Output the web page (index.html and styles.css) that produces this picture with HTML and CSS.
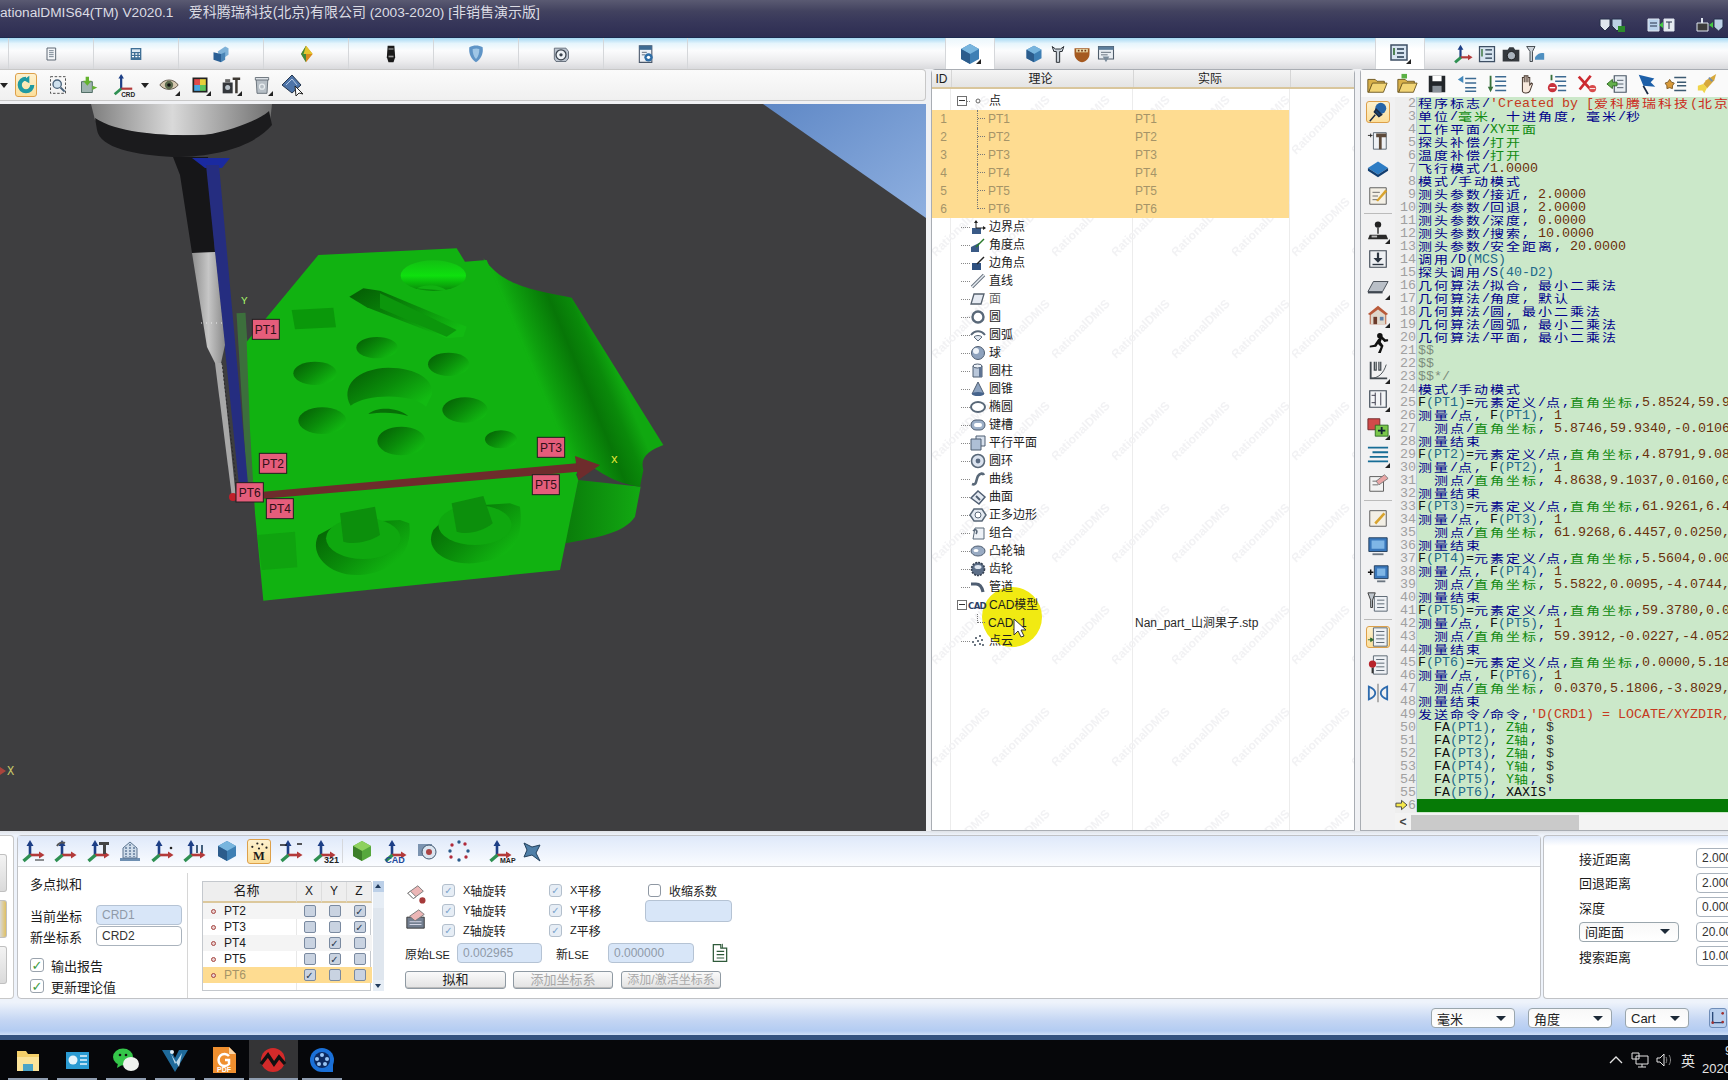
FILE: index.html
```html
<!DOCTYPE html>
<html lang="zh">
<head>
<meta charset="utf-8">
<title>RationalDMIS64</title>
<link rel="stylesheet" href="styles.css">
</head>
<body>
<svg class="sprite" aria-hidden="true">
<defs>
<symbol id="axis" viewBox="0 0 24 24"><path d="M9 4v13" stroke="#1d3f86" stroke-width="2.6"/><path d="M5.5 7L9 1l3.5 6z" fill="#1d3f86"/><path d="M9 16h10" stroke="#b33a3a" stroke-width="2.6"/><path d="M18 12.5l5.5 3.5-5.5 3.5z" fill="#b33a3a"/><path d="M9.5 16l-7 6" stroke="#2e9052" stroke-width="3.4"/></symbol>
<symbol id="paper" viewBox="0 0 24 24"><path d="M6 3h13v18H6z" fill="#f4f6f8" stroke="#55606c" stroke-width="1.4"/><path d="M9 7h7M9 10h7M9 13h7M9 16h7" stroke="#6a7684" stroke-width="1.3"/></symbol>
<symbol id="cube" viewBox="0 0 24 24"><path d="M12 2l9 5v10l-9 5-9-5V7z" fill="#3e7fb4"/><path d="M12 2l9 5-9 5-9-5z" fill="#78b5de"/><path d="M12 12v10l-9-5V7z" fill="#2c5c8c"/></symbol>
</defs>
</svg>

<header class="titlebar">
<div class="titletext">ationalDMIS64(TM) V2020.1 &nbsp; &nbsp;<span class="cj">爱科腾瑞科技(北京)有限公司</span> (2003-2020) [<span class="cj">非销售演示版</span>]</div>
<div class="wintools">
<svg class="wt" viewBox="0 0 28 16"><path d="M2 2h10v7l-5 5-5-5z" fill="#dfe5ee" stroke="#27304a"/><path d="M14 2h10v7l-5 5-5-5z" fill="#bcd0e6" stroke="#27304a"/><path d="M20 9h7v6h-7z" fill="#2c8b2c"/></svg>
<svg class="wt" viewBox="0 0 28 16"><path d="M1 2h11v12H1z" fill="#b9d1ea" stroke="#dfe6f0"/><path d="M3 6h7M3 9h7" stroke="#27304a"/><path d="M17 2h10v12H17z" fill="#e6ebf0" stroke="#dfe6f0"/><path d="M19 5h6M22 5v7" stroke="#27304a"/><path d="M12 8l4-3v6z" fill="#43c843"/></svg>
<svg class="wt" viewBox="0 0 28 16"><path d="M1 6h11v8H1z" fill="#3c3c3c" stroke="#dfe6f0"/><path d="M6 1v5" stroke="#dfe6f0" stroke-width="2"/><path d="M18 2h9v8l-4.500 4-4.500-4z" fill="#bcd0e6" stroke="#27304a"/><path d="M13 8l4-3v6z" fill="#43c843"/></svg>
</div>
</header>

<nav class="tabstrip">
<div class="tabs-left">
<div class="tab"><svg class="i16" viewBox="0 0 24 24"><use href="#paper"/></svg></div>
<div class="tab"><svg class="i16" viewBox="0 0 24 24"><path d="M4 3h16v18H4z" fill="#3f6f96"/><path d="M6 5h12v4H6z" fill="#dbe8f2"/><path d="M6 11h3v2H6zM11 11h3v2h-3zM16 11h2v2h-2zM6 15h3v2H6zM11 15h3v2h-3zM16 15h2v2h-2z" fill="#fff"/></svg></div>
<div class="tab"><svg class="i20" viewBox="0 0 24 24"><path d="M8 9l9-6 4 2v8l-9 6z" fill="#7fb2d8"/><path d="M3 10l9 2v10l-9-3z" fill="#2a5f95"/><path d="M12 12l5-2v9l-5 3z" fill="#4a85b6"/></svg></div>
<div class="tab"><svg class="i20" viewBox="0 0 24 24"><path d="M12 2l8 10-8 10-6-10z" fill="#d98a1c"/><path d="M12 2L6 12l6 10z" fill="#3f8a3a"/><path d="M12 2l8 10H9z" fill="#e4c52c"/></svg></div>
<div class="tab"><svg class="i20" viewBox="0 0 24 24"><path d="M8 2h8l1 14-2 6H9l-2-6z" fill="#1a1a1a"/><path d="M9 5h6v2H9z" fill="#777"/><path d="M9 14h6v2H9z" fill="#999"/></svg></div>
<div class="tab"><svg class="i20" viewBox="0 0 24 24"><path d="M4 4c5-3 11-3 16 0 1 8-2 14-8 18C6 18 3 12 4 4z" fill="#5f94c6"/><path d="M8 6c3-1 6-1 8 0 0 5-1 9-4 12-3-3-4-7-4-12z" fill="#9fc6e6"/></svg></div>
<div class="tab"><svg class="i20" viewBox="0 0 24 24"><path d="M4 5h14l3 4v8l-3 4H6l-2-3z" fill="#bcc4cf" stroke="#56606c"/><circle cx="12" cy="13" r="6" fill="#eef2f6" stroke="#39424c" stroke-width="1.5"/><circle cx="12" cy="13" r="2" fill="#39424c"/></svg></div>
<div class="tab"><svg class="i20" viewBox="0 0 24 24"><path d="M4 2h15v20H4z" fill="#eef1f6" stroke="#49576a" stroke-width="1.3"/><path d="M4 2h15v5H4z" fill="#3e6a92"/><path d="M7 10h6M7 13h4" stroke="#49576a"/><circle cx="15" cy="16" r="5" fill="#2e6da6"/><circle cx="15" cy="16" r="2" fill="#fff"/></svg></div>
</div>
<div class="tabs-tree">
<div class="acttab"><svg class="i24" viewBox="0 0 24 24"><use href="#cube"/><path d="M18 22l5-5v5z" fill="#222"/></svg></div>
<div class="tabicons tree-icons">
<svg class="i20" viewBox="0 0 24 24"><use href="#cube"/></svg>
<svg class="i20" viewBox="0 0 24 24"><path d="M5 3l2 6h3v13h4V9h3l2-6-4 3h-6z" fill="#cbd2d9" stroke="#2d3238" stroke-width="1.2"/></svg>
<svg class="i20" viewBox="0 0 24 24"><path d="M3 5h18v7c0 6-5 9-9 10-4-1-9-4-9-10z" fill="#a55a20"/><path d="M5 6h14v4H5z" fill="#e9d6a2"/><path d="M7 7h2v2H7zM11 7h2v2h-2zM15 7h2v2h-2z" fill="#703512"/></svg>
<svg class="i20" viewBox="0 0 24 24"><path d="M3 3h18v15H3z" fill="#e8edf2" stroke="#4f5c6a" stroke-width="1.3"/><path d="M3 3h18v4H3z" fill="#5c7d9b"/><path d="M6 10h12M6 13h8" stroke="#4f5c6a"/><path d="M8 15l4 7 4-7z" fill="#7a8b9a"/></svg>
</div>
</div>
<div class="tabs-code">
<div class="acttab"><svg class="i24" viewBox="0 0 24 24"><path d="M3 3h16v15H3z" fill="#d7e4f0" stroke="#3e4f64" stroke-width="1.5"/><path d="M9 7h7M9 11h7M9 15h7" stroke="#25384d" stroke-width="1.5"/><path d="M6 6v7" stroke="#2f6b2f" stroke-width="1.6"/><path d="M18 22l5-5v5z" fill="#222"/></svg></div>
<div class="tabicons code-icons">
<svg class="i20" viewBox="0 0 24 24"><use href="#axis"/></svg>
<svg class="i20" viewBox="0 0 24 24"><path d="M3 3h18v18H3z" fill="#d7e4f0" stroke="#3e4f64" stroke-width="1.5"/><path d="M10 7h8M10 12h8M10 17h8" stroke="#25384d" stroke-width="1.5"/><path d="M6 6v9" stroke="#2f6b2f" stroke-width="1.6"/></svg>
<svg class="i20" viewBox="0 0 24 24"><path d="M2 7h6l2-3h5l2 3h5v14H2z" fill="#35393e"/><circle cx="12.500" cy="14" r="5" fill="#aab3bd" stroke="#111"/></svg>
<svg class="i20" viewBox="0 0 24 24"><path d="M2 3h10l-3 6v12H6V9z" fill="#cbd2d9" stroke="#2d3238"/><path d="M12 16c3-5 7-6 11-5v8H12z" fill="#4f8fc0"/></svg>
</div>
</div>
</nav>

<main class="workspace">
<section class="cadcol">
<div class="cadbar">
<span class="caret first"></span>
<span class="tool active"><svg class="i20" viewBox="0 0 24 24"><path d="M12 2a10 10 0 1 0 10 10h-5a5 5 0 1 1-5-5z" fill="#1f9aa2"/><path d="M9 6l7-5v9z" fill="#1f9aa2"/></svg></span>
<span class="tool"><svg class="i20" viewBox="0 0 24 24"><path d="M3 2h18v20H3z" fill="none" stroke="#333" stroke-dasharray="3 2"/><circle cx="11" cy="11" r="5" fill="#cfe1ee" stroke="#49627a" stroke-width="1.6"/><path d="M15 15l5 5" stroke="#49627a" stroke-width="2.400"/></svg></span>
<span class="tool"><svg class="i20" viewBox="0 0 24 24"><path d="M3 8h13v13H3z" fill="#9fb4b0" stroke="#3a5a50"/><path d="M8 2v5h-3l5 6 5-6h-3V2z" fill="#63b32e"/><path d="M16 13l6 2-6 3z" fill="#63b32e"/></svg></span>
<span class="tool wide"><svg class="crd" viewBox="0 0 30 26"><path d="M13 3v15" stroke="#1d3f86" stroke-width="2.400"/><path d="M10 6l3-5 3 5z" fill="#1d3f86"/><path d="M13 17h12" stroke="#b33a3a" stroke-width="2.400"/><path d="M13 17l-7 6" stroke="#2e9052" stroke-width="3"/><text x="13" y="26" class="crdtxt">CRD</text></svg></span>
<span class="caret after"></span>
<span class="tool corner"><svg class="i20" viewBox="0 0 24 24"><path d="M1 12c5-8 17-8 22 0-5 7-17 7-22 0z" fill="#d6c8b0" stroke="#4d4338"/><circle cx="12" cy="12" r="5" fill="#5d6b4d"/><circle cx="12" cy="12" r="2.200" fill="#111"/></svg></span>
<span class="tool corner"><svg class="i20" viewBox="0 0 24 24"><path d="M3 3h18v18H3z" fill="#222"/><path d="M5 5h7v7H5z" fill="#e24a4a"/><path d="M12 5h7v7h-7z" fill="#e6cf3a"/><path d="M5 12h7v7H5z" fill="#4aa6e2"/><path d="M12 12h7v7h-7z" fill="#5ac45a"/></svg></span>
<span class="tool corner"><svg class="i20" viewBox="0 0 24 24"><path d="M2 9h12v13H2z" fill="#33363a"/><path d="M5 5h6v4H5z" fill="#666"/><path d="M14 3h9v3h-3v16h-3V6h-3z" fill="#3e3a34"/><circle cx="8" cy="15" r="3" fill="#b9c2ca"/></svg></span>
<span class="tool corner"><svg class="i20" viewBox="0 0 24 24"><path d="M5 5h14l-1 17H6z" fill="#b7bfc6" stroke="#5a646e"/><path d="M4 3h16v3H4z" fill="#dbe0e5" stroke="#5a646e"/><circle cx="12" cy="14" r="3" fill="none" stroke="#e8edf0" stroke-width="1.500"/></svg></span>
<span class="tool"><svg class="i24" viewBox="0 0 24 24"><path d="M1 12L11 2l9 10-9 8z" fill="#4e74a8" stroke="#22344c"/><path d="M5 12l6-6 5 6" fill="none" stroke="#b6cbe6"/><path d="M14 13l1 10 3-3 4 1z" fill="#fff" stroke="#222"/></svg></span>
</div>
<div class="viewport">
<svg class="scene" viewBox="0 104 926 727">
<defs>
<linearGradient id="sky" x1="0" x2="1" y1="0" y2="1"><stop offset="0" stop-color="#5f88c6"/><stop offset="1" stop-color="#8fb0e0"/></linearGradient>
<linearGradient id="head" x1="0" x2="1" y1="0" y2="0"><stop offset="0" stop-color="#7e7e7e"/><stop offset=".45" stop-color="#d9d9d9"/><stop offset="1" stop-color="#707070"/></linearGradient>
<linearGradient id="rod" x1="0" x2="1" y1="0" y2="0"><stop offset="0" stop-color="#8e8e8e"/><stop offset=".5" stop-color="#c6c6c6"/><stop offset="1" stop-color="#8a8a8a"/></linearGradient>
<linearGradient id="hole" x1="0" x2="1" y1="0" y2=".7"><stop offset="0" stop-color="#045a04"/><stop offset=".55" stop-color="#0a8c0a"/><stop offset="1" stop-color="#12ba12"/></linearGradient>
<linearGradient id="well" x1="0" x2="0" y1="0" y2="1"><stop offset="0" stop-color="#12c012"/><stop offset=".5" stop-color="#0ee00e"/><stop offset="1" stop-color="#098809"/></linearGradient>
<linearGradient id="fold" gradientUnits="userSpaceOnUse" x1="1000" y1="420" x2="1212" y2="332"><stop offset="0" stop-color="#11b211"/><stop offset=".15" stop-color="#0ea00e"/><stop offset=".55" stop-color="#077607"/><stop offset=".8" stop-color="#0a8a0a"/><stop offset="1" stop-color="#10a810"/></linearGradient>
<linearGradient id="side" x1="0" x2="1" y1="0" y2="0"><stop offset="0" stop-color="#0a7c0a"/><stop offset="1" stop-color="#12aa12"/></linearGradient>
</defs>
<path d="M763 104h163v114z" fill="url(#sky)"/>
<path d="M241 313L252 493" stroke="#3c6f3c" stroke-width="9"/>
<path d="M91 104H272L270 122C240 140 120 140 95 120z" fill="url(#head)"/>
<path d="M95 118C120 135 175 136 205 135 235 130 262 118 269 111L272 125C255 145 220 157 173 157 135 155 100 148 97 130z" fill="#1b1b1d"/>
<path d="M173 157H208L215 252 192 253 180 175z" fill="#161618"/>
<path d="M192 158H230L222 168H205z" fill="#1a2aa0"/>
<path d="M206 165H219L249 495H240z" fill="#252d80"/>
<path d="M192 253L215 252 225 345 221 363H215L207 347z" fill="url(#rod)"/>
<path d="M215 363H222L236 498H232z" fill="#a8a8a8"/>
<path d="M222 363L238 498" stroke="#222" stroke-width=".8" stroke-dasharray="2 2"/>
<path d="M201 323L224 323" stroke="#eee" stroke-dasharray="1 4"/>
<circle cx="233" cy="497" r="4" fill="#c0202a"/>
<text x="241" y="304" class="axlabel y">Y</text>
<text x="7" y="775" class="axlabel x">X</text>
<path d="M0 767l6 4-6 4z" fill="#a8443c"/>
<g transform="translate(200 230) scale(.33333)">
<path d="M1135 750L1322 770 1305 860C1270 910 1200 920 1095 940z" fill="url(#side)"/>
<path d="M850 85C900 150 950 175 1115 203L1390 645C1350 660 1318 680 1330 720L1320 770C1240 760 1190 720 1150 690L1120 750z" fill="url(#fold)"/>
<path d="M140 335L355 75 770 55 795 95 860 90 1135 750 1080 1020 190 1112 165 850 150 600z" fill="#11b211"/>
<path d="M172 915L285 905 292 1012 185 1020z" fill="#0fa30f"/>
<ellipse cx="700" cy="137" rx="98" ry="46" fill="url(#well)"/>
<path d="M650 175C680 160 720 165 740 182z" fill="#11b211"/>
<path d="M448 200L490 175 540 182 800 290 790 320 740 325 500 232z" fill="url(#hole)"/>
<path d="M540 190L770 300 740 320 540 235z" fill="#0c960c"/>
<path d="M275 240L400 233 408 292 285 298z" fill="#0a980a"/>
<ellipse cx="531" cy="353" rx="62" ry="32" fill="url(#hole)"/>
<ellipse cx="746" cy="403" rx="62" ry="35" fill="url(#hole)"/>
<ellipse cx="345" cy="430" rx="65" ry="35" fill="url(#hole)"/>
<path d="M452 527C420 470 470 415 565 413 650 413 705 450 695 495L678 530C640 490 500 490 452 527z" fill="url(#hole)"/>
<path d="M505 552C530 530 590 530 625 558 580 545 540 548 505 552z" fill="#076f07"/>
<ellipse cx="795" cy="540" rx="68" ry="38" fill="url(#hole)"/>
<ellipse cx="367" cy="572" rx="72" ry="40" fill="url(#hole)"/>
<ellipse cx="604" cy="633" rx="72" ry="43" fill="url(#hole)"/>
<ellipse cx="903" cy="628" rx="48" ry="27" fill="url(#hole)"/>
<path d="M355 915C325 975 390 1040 480 1035 570 1030 640 975 628 880L600 870 420 880z" fill="url(#hole)"/>
<ellipse cx="490" cy="925" rx="112" ry="62" fill="#0fa80f"/>
<path d="M420 850L525 830 540 915C510 935 460 945 430 935z" fill="#0c8f0c"/>
<path d="M700 900C670 960 740 1005 820 1000 920 990 975 950 960 830L930 820 770 830z" fill="url(#hole)"/>
<ellipse cx="825" cy="885" rx="110" ry="60" fill="#0fa80f"/>
<path d="M755 820L850 798 878 880C850 905 800 915 770 905z" fill="#0c8f0c"/>
<path d="M190 785L1130 700 1135 725 190 806z" fill="#6e2c2c"/>
<path d="M1125 678L1200 705 1135 750z" fill="#6e2c2c"/>
<text x="1243" y="698" class="axlabel big">x</text>
<g class="mk"><rect x="157" y="268" width="81" height="60"/><text x="197" y="311">PT1</text></g>
<g class="mk"><rect x="178" y="670" width="82" height="60"/><text x="219" y="713">PT2</text></g>
<g class="mk"><rect x="1012" y="622" width="82" height="60"/><text x="1053" y="665">PT3</text></g>
<g class="mk"><rect x="997" y="734" width="81" height="60"/><text x="1038" y="776">PT5</text></g>
<g class="mk"><rect x="199" y="806" width="81" height="60"/><text x="240" y="848">PT4</text></g>
<g class="mk"><rect x="108" y="758" width="82" height="58"/><text x="149" y="800">PT6</text></g>
</g>
</svg>
</div>
</section>

<section class="treepanel">
<div class="treehead"><span class="h-id">ID</span><span class="h-th">理论</span><span class="h-ac">实际</span><span class="h-rest"></span></div>
<div class="treebody">
<svg class="wmark" aria-hidden="true"><defs><pattern id="wm" width="60" height="102" patternUnits="userSpaceOnUse"><text x="4" y="66" transform="rotate(-45 4 66)" class="wmt">RationalDMIS</text></pattern></defs><rect width="100%" height="100%" fill="url(#wm)"/></svg>
<div class="spot"></div>
<div class="row"><span class="c-id"></span><span class="c-th"><i class="box"></i><i class="dots short"></i><svg class="ti" viewBox="0 0 16 16"><circle cx="8" cy="8" r="2" fill="none" stroke="#666"/></svg><b class="nm">点</b></span></div>
<div class="row sel"><span class="c-id">1</span><span class="c-th"><i class="el"></i><b class="nm">PT1</b></span><span class="c-ac">PT1</span></div>
<div class="row sel"><span class="c-id">2</span><span class="c-th"><i class="el"></i><b class="nm">PT2</b></span><span class="c-ac">PT2</span></div>
<div class="row sel"><span class="c-id">3</span><span class="c-th"><i class="el"></i><b class="nm">PT3</b></span><span class="c-ac">PT3</span></div>
<div class="row sel"><span class="c-id">4</span><span class="c-th"><i class="el"></i><b class="nm">PT4</b></span><span class="c-ac">PT4</span></div>
<div class="row sel"><span class="c-id">5</span><span class="c-th"><i class="el"></i><b class="nm">PT5</b></span><span class="c-ac">PT5</span></div>
<div class="row sel"><span class="c-id">6</span><span class="c-th"><i class="el last"></i><b class="nm">PT6</b></span><span class="c-ac">PT6</span></div>
<div class="row"><span class="c-id"></span><span class="c-th"><i class="dots"></i><svg class="ti" viewBox="0 0 16 16"><path d="M2 9h9v6H2z" fill="#3a5a86"/><path d="M6 9V2M6 9h9" stroke="#222"/><path d="M4 4l2-3 2 3zM13 7l3 2-3 2z" fill="#222"/></svg><b class="nm">边界点</b></span></div>
<div class="row"><span class="c-id"></span><span class="c-th"><i class="dots"></i><svg class="ti" viewBox="0 0 16 16"><path d="M1 10l8-4v9H1z" fill="#3a5a86"/><path d="M6 10l8-8" stroke="#2b7a2b" stroke-width="1.500"/></svg><b class="nm">角度点</b></span></div>
<div class="row"><span class="c-id"></span><span class="c-th"><i class="dots"></i><svg class="ti" viewBox="0 0 16 16"><path d="M2 8h9v7H2z" fill="#2f5180"/><path d="M7 9l7-7" stroke="#222" stroke-width="1.500"/></svg><b class="nm">边角点</b></span></div>
<div class="row"><span class="c-id"></span><span class="c-th"><i class="dots"></i><svg class="ti" viewBox="0 0 16 16"><path d="M2 14L14 2" stroke="#6a7480" stroke-width="3.400"/><path d="M2 14L14 2" stroke="#e8edf3" stroke-width="1.400"/></svg><b class="nm">直线</b></span></div>
<div class="row"><span class="c-id"></span><span class="c-th"><i class="dots"></i><svg class="ti" viewBox="0 0 16 16"><path d="M4 3h10l-3 10H1z" fill="#e6ebf3" stroke="#56616e" stroke-width="1.300"/></svg><b class="nm mute">面</b></span></div>
<div class="row"><span class="c-id"></span><span class="c-th"><i class="dots"></i><svg class="ti" viewBox="0 0 16 16"><circle cx="8" cy="8" r="5.500" fill="#fff" stroke="#596878" stroke-width="2.400"/></svg><b class="nm">圆</b></span></div>
<div class="row"><span class="c-id"></span><span class="c-th"><i class="dots"></i><svg class="ti" viewBox="0 0 16 16"><path d="M1 8c4-5 10-5 14 0" fill="none" stroke="#596878" stroke-width="2"/><path d="M4 10c2-2 6-2 8 0l-4 4z" fill="#dfe6ef" stroke="#596878"/></svg><b class="nm">圆弧</b></span></div>
<div class="row"><span class="c-id"></span><span class="c-th"><i class="dots"></i><svg class="ti" viewBox="0 0 16 16"><circle cx="8" cy="8" r="6.500" fill="#8ea2bd" stroke="#4f5e72"/><circle cx="6" cy="6" r="3" fill="#eef3f9"/></svg><b class="nm">球</b></span></div>
<div class="row"><span class="c-id"></span><span class="c-th"><i class="dots"></i><svg class="ti" viewBox="0 0 16 16"><path d="M3 3h9v11H3z" fill="#b9c7da" stroke="#4f5e72"/><ellipse cx="7.500" cy="3" rx="4.500" ry="2" fill="#eef3f9" stroke="#4f5e72"/><path d="M9 4h3v10H9z" fill="#5f7392"/></svg><b class="nm">圆柱</b></span></div>
<div class="row"><span class="c-id"></span><span class="c-th"><i class="dots"></i><svg class="ti" viewBox="0 0 16 16"><path d="M8 1l6 12H2z" fill="#8da3c0" stroke="#4f5e72"/><ellipse cx="8" cy="13" rx="6" ry="2" fill="#46648c"/></svg><b class="nm">圆锥</b></span></div>
<div class="row"><span class="c-id"></span><span class="c-th"><i class="dots"></i><svg class="ti" viewBox="0 0 16 16"><ellipse cx="8" cy="8" rx="7" ry="5" fill="#fff" stroke="#596878" stroke-width="2"/></svg><b class="nm">椭圆</b></span></div>
<div class="row"><span class="c-id"></span><span class="c-th"><i class="dots"></i><svg class="ti" viewBox="0 0 16 16"><rect x="1" y="3" width="14" height="10" rx="5" fill="#9db0c8" stroke="#4f5e72"/><rect x="4" y="6" width="8" height="4" rx="2" fill="#fff"/></svg><b class="nm">键槽</b></span></div>
<div class="row"><span class="c-id"></span><span class="c-th"><i class="dots"></i><svg class="ti" viewBox="0 0 16 16"><path d="M6 1h9v10H6z" fill="#d7e0ec" stroke="#4f5e72"/><path d="M1 4h10v11H1z" fill="#aebfd6" stroke="#4f5e72"/></svg><b class="nm">平行平面</b></span></div>
<div class="row"><span class="c-id"></span><span class="c-th"><i class="dots"></i><svg class="ti" viewBox="0 0 16 16"><circle cx="8" cy="8" r="6.500" fill="#dbe3ef" stroke="#596878" stroke-width="1.600"/><circle cx="8" cy="8" r="2.400" fill="#5b6c82"/></svg><b class="nm">圆环</b></span></div>
<div class="row"><span class="c-id"></span><span class="c-th"><i class="dots"></i><svg class="ti" viewBox="0 0 16 16"><path d="M2 13c5 2 4-5 6-8s5-3 6-1" fill="none" stroke="#596878" stroke-width="2.600"/></svg><b class="nm">曲线</b></span></div>
<div class="row"><span class="c-id"></span><span class="c-th"><i class="dots"></i><svg class="ti" viewBox="0 0 16 16"><path d="M1 9l7-7 7 6-6 7z" fill="#e4eaf2" stroke="#4f5e72" stroke-width="1.500"/><path d="M6 7l4 4" stroke="#4f5e72" stroke-width="2"/></svg><b class="nm">曲面</b></span></div>
<div class="row"><span class="c-id"></span><span class="c-th"><i class="dots"></i><svg class="ti" viewBox="0 0 16 16"><path d="M4 2h8l4 6-4 6H4L0 8z" fill="#e4eaf2" stroke="#596878" stroke-width="1.500"/><circle cx="8" cy="8" r="3" fill="#fff" stroke="#596878"/></svg><b class="nm">正多边形</b></span></div>
<div class="row"><span class="c-id"></span><span class="c-th"><i class="dots"></i><svg class="ti" viewBox="0 0 16 16"><path d="M5 3h9v11H3z" fill="#eef2f7" stroke="#596878"/><path d="M3 6c3-3 5 0 3 3" fill="none" stroke="#596878" stroke-width="1.600"/></svg><b class="nm">组合</b></span></div>
<div class="row"><span class="c-id"></span><span class="c-th"><i class="dots"></i><svg class="ti" viewBox="0 0 16 16"><ellipse cx="8" cy="8" rx="7" ry="5" fill="#99abc3" stroke="#4f5e72"/><ellipse cx="6" cy="7.500" rx="2.500" ry="1.600" fill="#fff"/></svg><b class="nm">凸轮轴</b></span></div>
<div class="row"><span class="c-id"></span><span class="c-th"><i class="dots"></i><svg class="ti" viewBox="0 0 16 16"><circle cx="8" cy="8" r="6.500" fill="#5d6f88" stroke="#333f50" stroke-width="1.600" stroke-dasharray="2 1"/><ellipse cx="8" cy="6" rx="3.500" ry="2" fill="#dfe7f1"/></svg><b class="nm">齿轮</b></span></div>
<div class="row"><span class="c-id"></span><span class="c-th"><i class="dots"></i><svg class="ti" viewBox="0 0 16 16"><path d="M1 5h5c4 0 6 3 7 8" fill="none" stroke="#4f5e72" stroke-width="3.200"/></svg><b class="nm">管道</b></span></div>
<div class="row"><span class="c-id"></span><span class="c-th"><i class="box"></i><b class="cadmark">CAD</b><b class="nm cadnm">CAD模型</b></span></div>
<div class="row"><span class="c-id"></span><span class="c-th"><i class="el last"></i><b class="nm">CAD_1</b></span><span class="c-ac dark">Nan_part_山涧果子.stp</span></div>
<div class="row"><span class="c-id"></span><span class="c-th"><i class="dots"></i><svg class="ti" viewBox="0 0 16 16"><g fill="#3d4a5a"><circle cx="3" cy="9" r="1"/><circle cx="6" cy="5" r="1"/><circle cx="10" cy="3" r="1"/><circle cx="8" cy="8" r="1"/><circle cx="12" cy="7" r="1"/><circle cx="5" cy="12" r="1"/><circle cx="10" cy="11" r="1"/><circle cx="13" cy="12" r="1"/></g></svg><b class="nm">点云</b></span></div>
<svg class="cursor" viewBox="0 0 14 20"><path d="M1 1v16l4-4 3 6 3-1-3-6h5z" fill="#fff" stroke="#333"/></svg>
</div>
</section>

<section class="codepanel">
<div class="codetools">
<svg class="i22" viewBox="0 0 24 24"><path d="M2 7h8l2 2h8v3H7l-4 9H2z" fill="#d9b14a" stroke="#6a5520"/><path d="M7 11h16l-4 10H3z" fill="#f2d576" stroke="#6a5520"/></svg>
<svg class="i22" viewBox="0 0 24 24"><path d="M2 7h8l2 2h8v3H7l-4 9H2z" fill="#d9b14a" stroke="#6a5520"/><path d="M7 11h16l-4 10H3z" fill="#f2d576" stroke="#6a5520"/><path d="M6 1h6v5H6z" fill="#5ab044"/></svg>
<svg class="i22" viewBox="0 0 24 24"><path d="M3 3h18v18H3z" fill="#22262a"/><path d="M7 3h10v6H7z" fill="#fff"/><path d="M7 14h10v7H7z" fill="#8a929a"/></svg>
<svg class="i22" viewBox="0 0 24 24"><path d="M10 6h12M10 11h12M10 16h12M10 20h12" stroke="#3c6a92" stroke-width="1.700"/><path d="M8 3L2 7l6 4z" fill="#4488bb"/></svg>
<svg class="i22" viewBox="0 0 24 24"><path d="M10 4h12M10 9h12M10 14h12M10 19h12" stroke="#3c6a92" stroke-width="1.700"/><path d="M5 3v14" stroke="#38703a" stroke-width="2"/><path d="M2 15l3 6 3-6z" fill="#38703a"/></svg>
<svg class="i22" viewBox="0 0 24 24"><path d="M7 12V5h2v5V3h2v7V3h2v7V5h2v8l2-2 1 1-3 8c-1 2-7 3-8 0z" fill="#f7e8dc" stroke="#4a3b32" stroke-width="1.100"/></svg>
<svg class="i22" viewBox="0 0 24 24"><path d="M10 4h12M10 9h12M13 14h9M13 19h9" stroke="#3c6a92" stroke-width="1.700"/><path d="M6 2v6" stroke="#38703a" stroke-width="2"/><circle cx="7" cy="16" r="5" fill="#c8323c"/><path d="M4 16h6" stroke="#fff" stroke-width="1.500"/></svg>
<svg class="i22" viewBox="0 0 24 24"><path d="M3 4l13 14M16 3L4 18" stroke="#cc2a30" stroke-width="3"/><circle cx="18" cy="17" r="4" fill="#d84a4a"/><path d="M15 17h6" stroke="#fff"/></svg>
<svg class="i22" viewBox="0 0 24 24"><path d="M9 3h13v18H9z" fill="#e9eef3" stroke="#4b5866" stroke-width="1.300"/><path d="M12 8h7M12 12h7M12 16h7" stroke="#4b5866"/><path d="M1 12l6-5v3h5v4H7v3z" fill="#63b04a" stroke="#2f6a23"/></svg>
<svg class="i22" viewBox="0 0 24 24"><path d="M3 2l17 4-4 4 5 5-13-1z" fill="#1d5fa8"/><path d="M8 14l5 9" stroke="#1a2a44" stroke-width="2"/></svg>
<svg class="i22" viewBox="0 0 24 24"><path d="M9 5h13M9 19h13M12 10h10M12 14h10" stroke="#3c5a72" stroke-width="1.700"/><path d="M4 7l2 3 3 1-2 3 0 3-3-1-3 1 0-3-2-3 3-1z" fill="#d89a3a" stroke="#7a5520"/></svg>
<svg class="i22" viewBox="0 0 24 24"><path d="M8 12l3-4L22 1l-2 7-8 9z" fill="#d7a83a"/><path d="M2 14l6-2 4 4-3 6-2-3-5 0z" fill="#f0d44a"/><path d="M14 5l4 4" stroke="#7a8fa8" stroke-width="2"/></svg>
</div>
<div class="codewrap">
<div class="siderail">
<span class="rb active"><svg class="i22" viewBox="0 0 24 24"><circle cx="15" cy="8" r="6" fill="#2665a8"/><path d="M10 9l6 6-3 2-5-5zM9 15l-6 7" stroke="#1b2b44" stroke-width="1.600" fill="#18406e"/></svg></span>
<span class="rb"><svg class="i22" viewBox="0 0 24 24"><path d="M7 4h14v18H7z" fill="#eef1f5" stroke="#54606c"/><path d="M10 5h11v4h-5v13h-3V9h-3z" fill="#5d4a3a"/><path d="M1 7h5M4 5v4" stroke="#222"/></svg></span>
<span class="rb"><svg class="i22" viewBox="0 0 24 24"><path d="M1 12l11-7 11 7-11 7z" fill="#2d7cc4"/><path d="M1 12v3l11 7 11-7v-3l-11 7z" fill="#123e70"/></svg></span>
<span class="rb"><svg class="i22" viewBox="0 0 24 24"><path d="M3 3h18v18H3z" fill="#f4f0e6" stroke="#555"/><path d="M6 8h8M6 12h6M6 16h6" stroke="#666"/><path d="M10 17l10-12 2 2-10 11z" fill="#d8a32e"/></svg></span>
<span class="railsep"></span>
<span class="rb corner"><svg class="i22" viewBox="0 0 24 24"><circle cx="12" cy="5" r="3.500" fill="#222"/><path d="M11 8h2v7h-2z" fill="#555"/><path d="M3 16h18l2 5H1z" fill="#2a2a2a"/><path d="M5 17h6v2H5z" fill="#bbb"/></svg></span>
<span class="rb"><svg class="i22" viewBox="0 0 24 24"><path d="M3 3h18v18H3z" fill="#eef0f3" stroke="#3b4450" stroke-width="1.200"/><path d="M12 5v8" stroke="#2a3440" stroke-width="2.400"/><path d="M7 11l5 5 5-5z" fill="#2a3440"/><path d="M6 18h12" stroke="#2a3440" stroke-width="1.500"/></svg></span>
<span class="rb corner"><svg class="i22" viewBox="0 0 24 24"><path d="M7 6h16l-6 11H1z" fill="#b9bfc7" stroke="#3f4650"/><path d="M1 17h16v2H1z" fill="#3f4650"/></svg></span>
<span class="rb corner"><svg class="i22" viewBox="0 0 24 24"><path d="M12 2L1 11l2 1v10h18V12l2-1z" fill="#b95a3a"/><path d="M4 12l8-6 8 6v10H4z" fill="#dfd8cc"/><path d="M7 14h4v8H7z" fill="#6b3a2a"/><path d="M14 14h4v4h-4z" fill="#5f7fa8"/></svg></span>
<span class="rb"><svg class="i22" viewBox="0 0 24 24"><circle cx="14" cy="4" r="3" fill="#111"/><path d="M12 8l-4 6-5 1v2l7-1 2-3 3 3-3 7h3l3-8-3-4 1-3 3 3 4-1v-2l-3 0-4-4z" fill="#111"/></svg></span>
<span class="rb corner"><svg class="i22" viewBox="0 0 24 24"><path d="M4 2v18h18" fill="none" stroke="#42494f" stroke-width="2"/><path d="M8 2v9h2V2M13 2v9h2V2" fill="none" stroke="#42494f" stroke-width="1.400"/><path d="M4 20c8 0 14-5 17-15" fill="none" stroke="#42494f"/></svg></span>
<span class="rb corner"><svg class="i22" viewBox="0 0 24 24"><path d="M3 3h18v18H3z" fill="#f3f5f7" stroke="#3f4a56" stroke-width="1.300"/><path d="M9 5v14M15 5v14M5 8h4M5 16h4" stroke="#334"/></svg></span>
<span class="rb corner"><svg class="i22" viewBox="0 0 24 24"><path d="M1 3h13v12H1z" fill="#d14a4a" stroke="#6e2a2a"/><path d="M9 10h14v12H9z" fill="#7ac74a" stroke="#2e6a23"/><path d="M16 12v8M12 16h8" stroke="#123" stroke-width="2"/></svg></span>
<span class="rb corner"><svg class="i22" viewBox="0 0 24 24"><path d="M1 4h22M6 9h17M3 14h20M1 19h22" stroke="#176d96" stroke-width="2"/></svg></span>
<span class="rb"><svg class="i22" viewBox="0 0 24 24"><path d="M3 5h15v16H3z" fill="#f2f2f2" stroke="#555"/><path d="M6 10h8M6 14h6" stroke="#666"/><path d="M10 10L19 3l4 4-10 7z" fill="#e9a5a5" stroke="#777"/></svg></span>
<span class="railsep"></span>
<span class="rb"><svg class="i22" viewBox="0 0 24 24"><path d="M3 4h18v17H3z" fill="#f3efe5" stroke="#555"/><path d="M8 17l10-11 2 2-10 11z" fill="#d8a32e"/></svg></span>
<span class="rb"><svg class="i22" viewBox="0 0 24 24"><path d="M2 3h20v15H2z" fill="#3a78bc" stroke="#223c5a"/><path d="M5 6h14v9H5z" fill="#7fb6e6"/><path d="M6 20h12v2H6z" fill="#6b7580"/></svg></span>
<span class="rb"><svg class="i22" viewBox="0 0 24 24"><path d="M8 3h15v14H8z" fill="#3a78bc" stroke="#223c5a"/><path d="M11 6h9v8h-9z" fill="#7fb6e6"/><path d="M11 19h9v2h-9z" fill="#6b7580"/><path d="M1 10h6M4 7v6" stroke="#111" stroke-width="1.600"/></svg></span>
<span class="rb"><svg class="i22" viewBox="0 0 24 24"><path d="M8 6h14v16H8z" fill="#eef1f5" stroke="#54606c"/><path d="M11 10h8M11 14h8M11 18h8" stroke="#54606c"/><path d="M1 2l3 8v8h2v-8l3-8z" fill="#bfc6cd" stroke="#333"/></svg></span>
<span class="railsep"></span>
<span class="rb active"><svg class="i22" viewBox="0 0 24 24"><path d="M7 2h15v20H7z" fill="#eef1f5" stroke="#54606c"/><path d="M10 6h9M10 10h9M10 14h9M10 18h9" stroke="#54606c"/><path d="M1 15h4M4 13l3 2-3 2z" fill="#2f6b2f" stroke="#2f6b2f"/></svg></span>
<span class="rb"><svg class="i22" viewBox="0 0 24 24"><path d="M7 2h15v20H7z" fill="#eef1f5" stroke="#54606c"/><path d="M10 6h9M10 10h9M10 14h9M10 18h9" stroke="#54606c"/><circle cx="6" cy="11" r="4" fill="#b8232b"/><path d="M6 15v6" stroke="#333" stroke-width="2"/></svg></span>
<span class="rb"><svg class="i22" viewBox="0 0 24 24"><path d="M12 2v20" stroke="#777" stroke-width="1.200"/><path d="M2 5c5 2 7 4 7 7s-2 5-7 7z" fill="none" stroke="#2d6bae" stroke-width="2"/><path d="M22 5c-5 2-7 4-7 7s2 5 7 7z" fill="none" stroke="#2d6bae" stroke-width="2"/></svg></span>
</div>
<div class="editor">
<div class="lines">
<div class="ln"><span class="no">2</span><span class="tx"><b class="k">程序标志</b>/<i class="r">'Created by [</i><b class="rk">爱科腾瑞科技</b><i class="r">(</i><b class="rk">北京</b><i class="r">)</i></span></div>
<div class="ln"><span class="no">3</span><span class="tx"><b class="k">单位</b>/<b class="g">毫米</b>, <b class="k">十进角度</b>, <b class="k">毫米</b>/<b class="k">秒</b></span></div>
<div class="ln"><span class="no">4</span><span class="tx"><b class="k">工作平面</b>/<i class="gn">XY</i><b class="g">平面</b></span></div>
<div class="ln"><span class="no">5</span><span class="tx"><b class="k">探头补偿</b>/<b class="g">打开</b></span></div>
<div class="ln"><span class="no">6</span><span class="tx"><b class="k">温度补偿</b>/<b class="g">打开</b></span></div>
<div class="ln"><span class="no">7</span><span class="tx"><b class="k">飞行模式</b>/<i class="n">1.0000</i></span></div>
<div class="ln"><span class="no">8</span><span class="tx"><b class="k">模式</b>/<b class="k">手动模式</b></span></div>
<div class="ln"><span class="no">9</span><span class="tx"><b class="k">测头参数</b>/<b class="k">接近</b>, <i class="n">2.0000</i></span></div>
<div class="ln"><span class="no">10</span><span class="tx"><b class="k">测头参数</b>/<b class="k">回退</b>, <i class="n">2.0000</i></span></div>
<div class="ln"><span class="no">11</span><span class="tx"><b class="k">测头参数</b>/<b class="k">深度</b>, <i class="n">0.0000</i></span></div>
<div class="ln"><span class="no">12</span><span class="tx"><b class="k">测头参数</b>/<b class="k">搜索</b>, <i class="n">10.0000</i></span></div>
<div class="ln"><span class="no">13</span><span class="tx"><b class="k">测头参数</b>/<b class="k">安全距离</b>, <i class="n">20.0000</i></span></div>
<div class="ln"><span class="no">14</span><span class="tx"><b class="k">调用</b>/D<i class="p">(MCS)</i></span></div>
<div class="ln"><span class="no">15</span><span class="tx"><b class="k">探头调用</b>/S<i class="p">(40-D2)</i></span></div>
<div class="ln"><span class="no">16</span><span class="tx"><b class="k">几何算法</b>/<b class="k">拟合</b>, <b class="k">最小二乘法</b></span></div>
<div class="ln"><span class="no">17</span><span class="tx"><b class="k">几何算法</b>/<b class="k">角度</b>, <b class="k">默认</b></span></div>
<div class="ln"><span class="no">18</span><span class="tx"><b class="k">几何算法</b>/<b class="k">圆</b>, <b class="k">最小二乘法</b></span></div>
<div class="ln"><span class="no">19</span><span class="tx"><b class="k">几何算法</b>/<b class="k">圆弧</b>, <b class="k">最小二乘法</b></span></div>
<div class="ln"><span class="no">20</span><span class="tx"><b class="k">几何算法</b>/<b class="k">平面</b>, <b class="k">最小二乘法</b></span></div>
<div class="ln"><span class="no">21</span><span class="tx"><i class="c">$$</i></span></div>
<div class="ln"><span class="no">22</span><span class="tx"><i class="c">$$</i></span></div>
<div class="ln"><span class="no">23</span><span class="tx"><i class="c">$$*/</i></span></div>
<div class="ln"><span class="no">24</span><span class="tx"><b class="k">模式</b>/<b class="k">手动模式</b></span></div>
<div class="ln"><span class="no">25</span><span class="tx"><i class="d">F</i><i class="p">(PT1)</i><i class="d">=</i><b class="k">元素定义</b>/<b class="k">点</b>,<b class="g">直角坐标</b>,<i class="n">5.8524,59.9154,0.0000</i></span></div>
<div class="ln"><span class="no">26</span><span class="tx"><b class="k">测量</b>/<b class="k">点</b>, <i class="d">F</i><i class="p">(PT1)</i>, <i class="n">1</i></span></div>
<div class="ln"><span class="no">27</span><span class="tx">  <b class="k">测点</b>/<b class="g">直角坐标</b>, <i class="n">5.8746,59.9340,-0.0106,0</i></span></div>
<div class="ln"><span class="no">28</span><span class="tx"><b class="k">测量结束</b></span></div>
<div class="ln"><span class="no">29</span><span class="tx"><i class="d">F</i><i class="p">(PT2)</i><i class="d">=</i><b class="k">元素定义</b>/<b class="k">点</b>,<b class="g">直角坐标</b>,<i class="n">4.8791,9.0846,0.0000</i></span></div>
<div class="ln"><span class="no">30</span><span class="tx"><b class="k">测量</b>/<b class="k">点</b>, <i class="d">F</i><i class="p">(PT2)</i>, <i class="n">1</i></span></div>
<div class="ln"><span class="no">31</span><span class="tx">  <b class="k">测点</b>/<b class="g">直角坐标</b>, <i class="n">4.8638,9.1037,0.0160,0</i></span></div>
<div class="ln"><span class="no">32</span><span class="tx"><b class="k">测量结束</b></span></div>
<div class="ln"><span class="no">33</span><span class="tx"><i class="d">F</i><i class="p">(PT3)</i><i class="d">=</i><b class="k">元素定义</b>/<b class="k">点</b>,<b class="g">直角坐标</b>,<i class="n">61.9261,6.4301,0.0000</i></span></div>
<div class="ln"><span class="no">34</span><span class="tx"><b class="k">测量</b>/<b class="k">点</b>, <i class="d">F</i><i class="p">(PT3)</i>, <i class="n">1</i></span></div>
<div class="ln"><span class="no">35</span><span class="tx">  <b class="k">测点</b>/<b class="g">直角坐标</b>, <i class="n">61.9268,6.4457,0.0250,0</i></span></div>
<div class="ln"><span class="no">36</span><span class="tx"><b class="k">测量结束</b></span></div>
<div class="ln"><span class="no">37</span><span class="tx"><i class="d">F</i><i class="p">(PT4)</i><i class="d">=</i><b class="k">元素定义</b>/<b class="k">点</b>,<b class="g">直角坐标</b>,<i class="n">5.5604,0.0000,-4.0</i></span></div>
<div class="ln"><span class="no">38</span><span class="tx"><b class="k">测量</b>/<b class="k">点</b>, <i class="d">F</i><i class="p">(PT4)</i>, <i class="n">1</i></span></div>
<div class="ln"><span class="no">39</span><span class="tx">  <b class="k">测点</b>/<b class="g">直角坐标</b>, <i class="n">5.5822,0.0095,-4.0744,0</i></span></div>
<div class="ln"><span class="no">40</span><span class="tx"><b class="k">测量结束</b></span></div>
<div class="ln"><span class="no">41</span><span class="tx"><i class="d">F</i><i class="p">(PT5)</i><i class="d">=</i><b class="k">元素定义</b>/<b class="k">点</b>,<b class="g">直角坐标</b>,<i class="n">59.3780,0.0000,-4.0</i></span></div>
<div class="ln"><span class="no">42</span><span class="tx"><b class="k">测量</b>/<b class="k">点</b>, <i class="d">F</i><i class="p">(PT5)</i>, <i class="n">1</i></span></div>
<div class="ln"><span class="no">43</span><span class="tx">  <b class="k">测点</b>/<b class="g">直角坐标</b>, <i class="n">59.3912,-0.0227,-4.0522,0</i></span></div>
<div class="ln"><span class="no">44</span><span class="tx"><b class="k">测量结束</b></span></div>
<div class="ln"><span class="no">45</span><span class="tx"><i class="d">F</i><i class="p">(PT6)</i><i class="d">=</i><b class="k">元素定义</b>/<b class="k">点</b>,<b class="g">直角坐标</b>,<i class="n">0.0000,5.1800,-3.8</i></span></div>
<div class="ln"><span class="no">46</span><span class="tx"><b class="k">测量</b>/<b class="k">点</b>, <i class="d">F</i><i class="p">(PT6)</i>, <i class="n">1</i></span></div>
<div class="ln"><span class="no">47</span><span class="tx">  <b class="k">测点</b>/<b class="g">直角坐标</b>, <i class="n">0.0370,5.1806,-3.8029,0</i></span></div>
<div class="ln"><span class="no">48</span><span class="tx"><b class="k">测量结束</b></span></div>
<div class="ln"><span class="no">49</span><span class="tx"><b class="k">发送命令</b>/<b class="k">命令</b>,<i class="r">'D(CRD1) = LOCATE/XYZDIR,</i></span></div>
<div class="ln"><span class="no">50</span><span class="tx">  <i class="d">FA</i><i class="p">(PT1)</i>, <i class="gn">Z</i><b class="g">轴</b>, <i class="c dk">$</i></span></div>
<div class="ln"><span class="no">51</span><span class="tx">  <i class="d">FA</i><i class="p">(PT2)</i>, <i class="gn">Z</i><b class="g">轴</b>, <i class="c dk">$</i></span></div>
<div class="ln"><span class="no">52</span><span class="tx">  <i class="d">FA</i><i class="p">(PT3)</i>, <i class="gn">Z</i><b class="g">轴</b>, <i class="c dk">$</i></span></div>
<div class="ln"><span class="no">53</span><span class="tx">  <i class="d">FA</i><i class="p">(PT4)</i>, <i class="gn">Y</i><b class="g">轴</b>, <i class="c dk">$</i></span></div>
<div class="ln"><span class="no">54</span><span class="tx">  <i class="d">FA</i><i class="p">(PT5)</i>, <i class="gn">Y</i><b class="g">轴</b>, <i class="c dk">$</i></span></div>
<div class="ln"><span class="no">55</span><span class="tx">  <i class="d">FA</i><i class="p">(PT6)</i>, <i class="d">XAXIS</i>'</span></div>
<div class="ln cur"><span class="no"><svg class="pointer" viewBox="0 0 14 12"><path d="M1 4h6V1l6 5-6 5V8H1z" fill="#f6e84a" stroke="#444"/></svg>6</span><span class="tx"></span></div>
</div>
<div class="hscroll"><span class="sarrow">&lt;</span><span class="sthumb"></span></div>
</div>
</div>
</section>
</main>

<div class="lower">
<section class="dock">
<div class="stub">
<span class="stubbtn"></span>
<span class="stubbtn amber"></span>
<span class="stubbtn"></span>
</div>
<div class="mainpanel">
<div class="aligntools">
<svg class="i24" viewBox="0 0 24 24"><use href="#axis"/><path d="M14 21h9" stroke="#222"/></svg>
<svg class="i24" viewBox="0 0 24 24"><use href="#axis"/><path d="M4 7a6 6 0 0 1 8-3" fill="none" stroke="#555" stroke-width="2"/></svg>
<svg class="i24" viewBox="0 0 24 24"><use href="#axis"/><path d="M13 3h10v3h-3v9h-3V6h-4z" fill="#444"/></svg>
<svg class="i24" viewBox="0 0 24 24"><path d="M2 19h20v3H2z" fill="#6e8fb2"/><path d="M5 19V9l7-6 7 6v10z" fill="#cfdcea" stroke="#5c7590"/><path d="M8 8v10M12 5v13M16 8v10" stroke="#2d4d75" stroke-dasharray="2 1"/></svg>
<svg class="i24" viewBox="0 0 24 24"><use href="#axis"/><circle cx="21" cy="9" r="1.300" fill="#222"/></svg>
<svg class="i24" viewBox="0 0 24 24"><use href="#axis"/><path d="M15 6v8M20 6v8" stroke="#32506f" stroke-width="1.800"/></svg>
<svg class="i24" viewBox="0 0 24 24"><use href="#cube"/></svg>
<span class="tool active m"><svg class="i20" viewBox="0 0 24 24"><text x="12" y="23" class="mtxt">M</text><g fill="#222"><circle cx="4" cy="7" r="1.300"/><circle cx="10" cy="3" r="1.300"/><circle cx="16" cy="4" r="1.300"/><circle cx="21" cy="8" r="1.300"/><circle cx="12" cy="9" r="1.300"/></g></svg></span>
<svg class="i24" viewBox="0 0 24 24"><use href="#axis"/><path d="M1 6h7M18 5h5" stroke="#222" stroke-width="1.300"/></svg>
<svg class="i24" viewBox="0 0 24 24"><use href="#axis"/><text x="12" y="24" class="n321">321</text></svg>
<i class="barsep"></i>
<svg class="i24" viewBox="0 0 24 24"><path d="M12 2l9 5v10l-9 5-9-5V7z" fill="#57a83e"/><path d="M12 2l9 5-9 5-9-5z" fill="#8ed15e"/><path d="M12 12v10l-9-5V7z" fill="#3d7f2a"/></svg>
<svg class="i24" viewBox="0 0 24 24"><use href="#axis"/><text x="12" y="24" class="cadt">CAD</text></svg>
<svg class="i24" viewBox="0 0 24 24"><path d="M3 5h14v12H3z" fill="#7b93b0"/><circle cx="14" cy="13" r="7" fill="#dbe5f0" stroke="#445a72"/><circle cx="14" cy="13" r="3" fill="#a44"/></svg>
<svg class="i24" viewBox="0 0 24 24"><g fill="#b12a3a"><circle cx="5" cy="6" r="1.700"/><circle cx="18" cy="5" r="1.700"/><circle cx="4" cy="18" r="1.700"/><circle cx="19" cy="18" r="1.700"/></g><g fill="#2a5a8a"><circle cx="12" cy="3" r="1.700"/><circle cx="21" cy="12" r="1.700"/><circle cx="12" cy="21" r="1.700"/><circle cx="3" cy="12" r="1.700"/></g></svg>
<i class="barsep clear"></i>
<svg class="i24" viewBox="0 0 24 24"><use href="#axis"/><text x="12" y="24" class="map">MAP</text></svg>
<svg class="i24" viewBox="0 0 24 24"><path d="M4 4l8 4 8-2-4 8 4 8-8-6-8 2 3-7z" fill="#4f7fa8" stroke="#22405c"/></svg>
</div>
<div class="alignbody">
<div class="form">
<div class="formtitle">多点拟和</div>
<div class="frow gap1"><span class="flabel">当前坐标</span><span class="field off w86">CRD1</span></div>
<div class="frow"><span class="flabel">新坐标系</span><span class="field w86">CRD2</span></div>
<label class="chk first"><span class="gbox">✓</span>输出报告</label>
<label class="chk"><span class="gbox">✓</span>更新理论值</label>
</div>
<div class="gridwrap">
<div class="pgrid">
<div class="gh name">名称</div><div class="gh">X</div><div class="gh">Y</div><div class="gh">Z</div>
<div class="gc nmc alt"><i class="dot"></i>PT2</div><div class="gc alt"><i class="cb"></i></div><div class="gc alt"><i class="cb"></i></div><div class="gc alt"><i class="cb on">✓</i></div>
<div class="gc nmc"><i class="dot"></i>PT3</div><div class="gc"><i class="cb"></i></div><div class="gc"><i class="cb"></i></div><div class="gc"><i class="cb on">✓</i></div>
<div class="gc nmc alt"><i class="dot"></i>PT4</div><div class="gc alt"><i class="cb"></i></div><div class="gc alt"><i class="cb on">✓</i></div><div class="gc alt"><i class="cb"></i></div>
<div class="gc nmc"><i class="dot"></i>PT5</div><div class="gc"><i class="cb"></i></div><div class="gc"><i class="cb on">✓</i></div><div class="gc"><i class="cb"></i></div>
<div class="gc nmc hit"><i class="dot"></i>PT6</div><div class="gc hit"><i class="cb on">✓</i></div><div class="gc hit"><i class="cb"></i></div><div class="gc hit"><i class="cb"></i></div>
</div>
<div class="vscroll"><span class="vup"></span><span class="vtrack"></span><span class="vdown"></span></div>
</div>
<div class="opts">
<div class="optstop">
<div class="erasers">
<svg class="i22" viewBox="0 0 24 24"><path d="M3 11L14 3l6 6-11 8z" fill="#ecb6b6" stroke="#777"/><path d="M3 11l6 6 3-2-6-6z" fill="#fff" stroke="#777"/><circle cx="19" cy="19" r="3.400" fill="#a53a3a"/></svg>
<svg class="i22" viewBox="0 0 24 24"><path d="M2 10h19v12H2z" fill="#737f90" stroke="#333"/><path d="M5 15h13M5 18h13" stroke="#dde"/><path d="M5 9L15 2l6 5-10 7z" fill="#ecb6b6" stroke="#777"/></svg>
</div>
<div class="ccol c1">
<label class="opt"><span class="ob">✓</span><em class="xs">X</em>轴旋转</label>
<label class="opt"><span class="ob">✓</span><em class="xs">Y</em>轴旋转</label>
<label class="opt"><span class="ob">✓</span><em class="xs">Z</em>轴旋转</label>
</div>
<div class="ccol c2">
<label class="opt"><span class="ob">✓</span><em class="xs">X</em>平移</label>
<label class="opt"><span class="ob">✓</span><em class="xs">Y</em>平移</label>
<label class="opt"><span class="ob">✓</span><em class="xs">Z</em>平移</label>
</div>
<div class="ccol c3">
<label class="opt"><span class="ob blank"></span>收缩系数</label>
<span class="field off w87 shrink"></span>
</div>
</div>
<div class="lse">
<span class="lselabel">原始<em class="xs">LSE</em></span><span class="field off w85">0.002965</span>
<span class="lselabel two">新<em class="xs">LSE</em></span><span class="field off w86">0.000000</span>
<svg class="i20 report" viewBox="0 0 24 24"><path d="M4 2h9v4h7v16H4z" fill="#fff" stroke="#2f5a3a" stroke-width="1.500"/><path d="M8 10h9M8 14h9M8 18h9" stroke="#2f5a3a" stroke-width="1.400"/><path d="M15 1v5" stroke="#2f5a3a"/></svg>
</div>
<div class="btns">
<span class="btn">拟和</span><span class="btn dim b2">添加坐标系</span><span class="btn dim b3">添加/激活坐标系</span>
</div>
</div>
</div>
</div>
<div class="probepanel">
<div class="prow"><span class="plabel">接近距离</span><span class="field w60">2.0000</span></div>
<div class="prow"><span class="plabel">回退距离</span><span class="field w60">2.0000</span></div>
<div class="prow"><span class="plabel">深度</span><span class="field w60">0.0000</span></div>
<div class="prow"><span class="combo wmid"><span>间距面</span><i class="arr"></i></span><span class="field w60">20.0000</span></div>
<div class="prow"><span class="plabel">搜索距离</span><span class="field w60">10.0000</span></div>
</div>
</section>
<footer class="status">
<span class="combo w84"><span>毫米</span><i class="arr"></i></span>
<span class="combo w84"><span>角度</span><i class="arr"></i></span>
<span class="combo w64"><span>Cart</span><i class="arr"></i></span>
<span class="stbtn"><svg class="i16" viewBox="0 0 24 24"><path d="M4 3v16h16" fill="none" stroke="#2b4a7a" stroke-width="2"/><circle cx="19" cy="5" r="2" fill="#a03030"/><circle cx="19" cy="18" r="2" fill="#a03030"/><circle cx="4" cy="19" r="2" fill="#a03030"/></svg></span>
</footer>
</div>

<footer class="taskbar">
<div class="tb"><svg class="i28" viewBox="0 0 28 28"><path d="M3 5h9l2 3h11v17H3z" fill="#f4cf6a"/><path d="M3 11h22v14H3z" fill="#fbe39a"/><path d="M9 18h10v7H9z" fill="#4aa3c7"/></svg><i class="ul"></i></div>
<div class="tb"><svg class="i28" viewBox="0 0 28 28"><path d="M3 6h23v17H3z" fill="#2b9bd3"/><circle cx="10" cy="14" r="4.500" fill="#e6f4fb"/><path d="M17 10h7M17 14h7M17 18h7" stroke="#e6f4fb" stroke-width="1.600"/></svg><i class="ul"></i></div>
<div class="tb"><svg class="i28" viewBox="0 0 28 28"><ellipse cx="11" cy="11" rx="10" ry="8.500" fill="#35c64a"/><path d="M6 17l-1 5 5-3z" fill="#35c64a"/><ellipse cx="19" cy="18" rx="8" ry="7" fill="#eef2ee"/><circle cx="8" cy="9" r="1.300" fill="#111"/><circle cx="14" cy="9" r="1.300" fill="#111"/></svg><i class="ul"></i></div>
<div class="tb"><svg class="i28" viewBox="0 0 28 28"><path d="M1 4h9l4 8 4-8h9L14 26z" fill="#1f6a9a"/><path d="M10 8l4 10 7-11-3 14z" fill="#bcd9ea"/><circle cx="11" cy="6" r="2" fill="#ddeef7"/></svg><i class="ul"></i></div>
<div class="tb"><svg class="i28" viewBox="0 0 28 28"><path d="M3 1h16l7 7v19H3z" fill="#ef8f2f"/><path d="M19 1v7h7z" fill="#f9d6a7"/><path d="M19 10a6 6 0 1 0 0 8v-4h-4" fill="none" stroke="#fff" stroke-width="2.500"/><text x="14" y="26" class="pdf">PDF</text></svg><i class="ul"></i></div>
<div class="tb on"><svg class="i28" viewBox="0 0 28 28"><circle cx="14" cy="14" r="12" fill="#d32a2a"/><path d="M2 18l7-9 6 9 5-7 6 7" fill="none" stroke="#111" stroke-width="3.400"/></svg><i class="ul"></i></div>
<div class="tb"><svg class="i28" viewBox="0 0 28 28"><circle cx="14" cy="14" r="12" fill="#1a70d8"/><path d="M14 26h11v-8z" fill="#1a70d8"/><circle cx="14" cy="14" r="8" fill="#0d2a60"/><g fill="#9ac6f5"><circle cx="14" cy="9" r="2"/><circle cx="9" cy="13" r="2"/><circle cx="19" cy="13" r="2"/><circle cx="11" cy="18" r="2"/><circle cx="17" cy="18" r="2"/></g></svg><i class="ul"></i></div>
<div class="tray">
<svg class="trayic up" viewBox="0 0 14 10"><path d="M1 8l6-6 6 6" fill="none" stroke="#e4e4e4" stroke-width="1.300"/></svg>
<svg class="trayic" viewBox="0 0 18 16"><path d="M1 1h7v6H1zM5 4h12v8H5zM11 12v3M7 15h8" fill="none" stroke="#e4e4e4"/></svg>
<svg class="trayic" viewBox="0 0 18 16"><path d="M2 6h3l4-4v12l-4-4H2z" fill="none" stroke="#e4e4e4"/><path d="M11 5c1 2 1 4 0 6M14 3c2 3 2 7 0 10" fill="none" stroke="#888"/></svg>
<span class="ime">英</span>
<div class="clock"><div class="time">9:16</div><div class="date">2020/12/28</div></div>
</div>
</footer>
</body>
</html>
```

FILE: styles.css
```css
* { box-sizing: border-box; }
html, body { margin: 0; padding: 0; }
body {
  width: 1728px; height: 1080px; overflow: hidden;
  display: flex; flex-direction: column;
  font-family: "Liberation Sans", "Noto Sans CJK SC", sans-serif;
  font-size: 12px; color: #1c1c1c; background: #e9ebef;
}
b, i, em { font-style: normal; font-weight: normal; }
.sprite { position: absolute; width: 0; height: 0; }
svg { display: block; flex: none; overflow: visible; }
.i16 { width: 16px; height: 16px; }
.i20 { width: 20px; height: 20px; }
.i22 { width: 22px; height: 22px; }
.i24 { width: 24px; height: 24px; }
.i28 { width: 28px; height: 28px; }

/* title */
.titlebar {
  height: 38px; flex: none; display: flex; justify-content: space-between;
  background: linear-gradient(#5a5a72, #42425f 30%, #37375a 60%, #2d2d52);
  border-bottom: 1px solid #1c2a4e;
}
.titletext { color: #dcdce4; font-size: 13.7px; line-height: 16px; padding-top: 4px; white-space: nowrap; }
.cj { font-size: 14px; }
.wintools { display: flex; gap: 21px; padding: 17px 4px 0 0; }
.wt { width: 28px; height: 16px; }

/* tab strip */
.tabstrip {
  height: 31px; flex: none; display: flex;
  background: linear-gradient(#a6d8f3, #e6f5fc 18%, #fbfcfd 40%, #ececee 75%, #d9dadd);
}
.tabs-left { width: 931px; display: flex; padding-left: 8px; }
.tab {
  width: 85px; display: flex; align-items: center; justify-content: center;
  border-left: 1px solid #d5d7da;
}
.tab:last-child { border-right: 1px solid #d5d7da; }
.tabs-tree { width: 429px; display: flex; padding-left: 14px; }
.tabs-code { flex: 1; display: flex; padding-left: 15px; }
.acttab {
  width: 50px; display: flex; align-items: center; justify-content: center;
  background: linear-gradient(#eaf6fc, #fff 35%, #fff);
  border-left: 1px solid #d5d7da; border-right: 1px solid #d5d7da;
}
.tabicons { display: flex; align-items: center; }
.tree-icons { margin-left: 29px; gap: 4px; }
.code-icons { margin-left: 28px; gap: 4px; }

/* workspace */
.workspace { height: 762px; flex: none; display: flex; gap: 5px; background: #f0f1f4; }
.cadcol { width: 926px; display: flex; flex-direction: column; gap: 3px; }
.cadbar {
  height: 32px; flex: none; display: flex; align-items: center; gap: 9px;
  background: linear-gradient(#fbfbfb, #f0f0f0); border: 1px solid #c8c8c8; border-left: 0;
  border-radius: 0 4px 4px 0;
}
.caret { width: 0; height: 0; border: 4px solid transparent; border-top: 5px solid #222; border-bottom: 0; flex: none; }
.caret.first { margin-right: -2px; }
.caret.after { margin-left: -5px; }
.tool { width: 22px; height: 24px; display: flex; align-items: center; justify-content: center; flex: none; position: relative; }
.tool.wide { width: 28px; }
.crd { width: 28px; height: 24px; }
.crdtxt { font: bold 7px "Liberation Sans", sans-serif; fill: #222; }
.tool.active {
  background: linear-gradient(#fdf1cf, #fcdf9b); border: 1px solid #dda04a; border-radius: 3px;
  margin-right: 1px;
}
.tool.corner::after, .rb.corner::after {
  content: ""; position: absolute; right: 0; bottom: 1px;
  border-left: 5px solid transparent; border-bottom: 5px solid #222;
}
.viewport { flex: 1; background: #3e3e40; overflow: hidden; }
.scene { width: 926px; height: 727px; }
.axlabel { font: 11px "Liberation Mono", monospace; }
.axlabel.y { fill: #a6f56a; }
.axlabel.x { fill: #c8c86a; font-size: 12px; }
.axlabel.big { fill: #e8e83a; font-size: 36px; text-anchor: middle; }
.mk rect { fill: #e55d7b; stroke: #1f1f1f; stroke-width: 3; }
.mk text { font: 36px "Liberation Sans", sans-serif; fill: #301018; text-anchor: middle; }

/* tree */
.treepanel {
  width: 424px; flex: none; display: flex; flex-direction: column;
  background: #fff; border: 1px solid #a9adb3; border-radius: 4px 4px 0 0;
}
.treehead {
  height: 19px; flex: none; display: flex; line-height: 18px; text-align: center;
  background: linear-gradient(#f5f5f5, #e4e4e4); border-bottom: 2px solid #d9c69c;
}
.h-id { width: 19px; }
.h-th { width: 182px; padding-right: 4px; border-left: 1px solid #d6d6d6; }
.h-ac { width: 157px; padding-right: 4px; border-left: 1px solid #d6d6d6; }
.h-rest { flex: 1; border-left: 1px solid #d6d6d6; }
.treebody {
  flex: 1; position: relative; overflow: hidden; padding-top: 3px;
  background:
    linear-gradient(#ececec, #ececec) 18px 0 / 1px 100% no-repeat,
    linear-gradient(#ececec, #ececec) 200px 0 / 1px 100% no-repeat,
    linear-gradient(#ececec, #ececec) 357px 0 / 1px 100% no-repeat,
    #fff;
}
.wmark { position: absolute; left: 0; top: 0; width: 100%; height: 100%; }
.wmt { font: bold 12px "Liberation Sans", sans-serif; fill: #f2f2f4; }
.spot { position: absolute; left: 50px; top: 498px; width: 60px; height: 60px; border-radius: 50%; background: #f1ea12; }
.cursor { position: absolute; left: 81px; top: 529px; width: 14px; height: 20px; }
.row { height: 18px; display: flex; position: relative; align-items: center; line-height: 18px; }
.row.sel { background: #fedc91; width: 357px; color: #a59468; }
.c-id { width: 19px; text-align: right; padding-right: 4px; }
.c-th { width: 182px; display: flex; align-items: center; height: 18px; padding-left: 6px; }
.c-ac { padding-left: 2px; }
.c-ac.dark { color: #2a2a2a; }
.nm { padding-left: 3px; white-space: nowrap; }
.mute { color: #666; }
.box {
  width: 10px; height: 10px; border: 1px solid #707070; background: #fff; position: relative; flex: none;
}
.box::after { content: ""; position: absolute; left: 1px; right: 1px; top: 3px; height: 1px; background: #333; }
.dots { width: 9px; height: 0; border-bottom: 1px dotted #888; margin-left: 4px; flex: none; }
.dots.short { width: 3px; margin-left: 0; }
.ti { width: 16px; height: 16px; }
.el { width: 8px; height: 18px; margin-left: 20px; flex: none; position: relative; border-left: 1px dotted #777; }
.el.last { height: 9px; align-self: flex-start; }
.el::after { content: ""; position: absolute; left: 0; top: 8px; width: 7px; border-bottom: 1px dotted #777; }
.cadmark { font: bold 9.5px "DejaVu Sans Condensed", "Liberation Sans", sans-serif; color: #2c3f66; width: 22px; padding-right: 3px; text-align: right; letter-spacing: -.7px; white-space: nowrap; }
.cadnm { padding-left: 0; }

/* code */
.codepanel {
  flex: 1; display: flex; flex-direction: column; min-width: 0;
  background: #f3f3f4; border: 1px solid #a9adb3; border-right: 0; border-radius: 4px 0 0 0;
}
.codetools { height: 27px; flex: none; display: flex; align-items: center; gap: 8px; padding-left: 5px; background: #fafafa; }
.codewrap { flex: 1; display: flex; min-height: 0; }
.siderail { width: 34px; flex: none; display: flex; flex-direction: column; align-items: center; padding-top: 1px; background: #f1f1f2; }
.rb { width: 24px; height: 28px; flex: none; display: flex; align-items: center; justify-content: center; position: relative; }
.rb.active { height: 22px; margin: 3px 0; background: linear-gradient(#fdf1cf, #fcdf9b); border: 1px solid #dda04a; border-radius: 3px; }
.railsep { height: 7px; width: 28px; flex: none; border-bottom: 1px solid #bbb; transform: translateY(-3px); }
.editor { flex: 1; display: flex; flex-direction: column; min-width: 0; overflow: hidden; }
.lines { height: 716px; flex: none; overflow: hidden; background: linear-gradient(90deg, #eeeeee 22px, #cbe8c9 22px); }
.ln { height: 13px; display: flex; white-space: pre; font: 13.333px/13px "Liberation Mono", monospace; color: #00008b; }
.no { width: 22px; flex: none; text-align: right; color: #a0a0a0; position: relative; border-right: 1px solid #b9cfe2; }
.tx { padding-left: 1px; white-space: pre; }
.tx b {
  display: inline-block; height: 13px; vertical-align: top; line-height: 13px;
  font-family: "Noto Sans CJK SC", sans-serif; font-size: 14px; letter-spacing: 2px;
  transform: scaleY(.85);
}
.k { color: #00008b; }
.g { color: #118a11; }
.rk { color: #cc2a1a; }
.r { color: #c53a20; }
.n { color: #6a2f0a; }
.p { color: #1f6a8a; }
.d { color: #111; }
.gn { color: #118a11; }
.c { color: #7d8d7d; }
.c.dk { color: #333; }
.cur .tx { flex: 1; background: #067a06; }
.pointer { position: absolute; left: 0; top: 0; width: 13px; height: 12px; }
.hscroll { height: 16px; margin-top: 1px; display: flex; align-items: center; background: #f3f3f3; }
.sarrow { width: 16px; text-align: center; font: bold 12px "Liberation Sans", sans-serif; color: #444; }
.sthumb { width: 168px; height: 15px; background: #cacaca; }

/* lower */
.lower {
  flex: none; height: 204px; padding-top: 4px;
  background: linear-gradient(#dfe2e7, #eef3fb 4px, #eef3fb 84%, #c3d5f3 93%, #b3ccf2 98%, #cfe0f7);
}
.dock { height: 164px; display: flex; }
.stub {
  width: 14px; flex: none; margin-right: 3px; padding-top: 18px;
  display: flex; flex-direction: column; gap: 8px;
  background: #fff; border: 1px solid #c8c8c8; border-left: 0; border-radius: 0 4px 4px 0;
}
.stubbtn { width: 7px; height: 38px; background: linear-gradient(#f3f3f3, #dadada); border: 1px solid #c0c0c0; border-left: 0; border-radius: 0 3px 3px 0; }
.stubbtn.amber { background: linear-gradient(90deg, #d8d8d8, #e0c060); }
.mainpanel {
  width: 1524px; flex: none; display: flex; flex-direction: column;
  background: #fff; border: 1px solid #c0c2c6; border-radius: 4px;
}
.aligntools {
  height: 31px; flex: none; display: flex; align-items: center; gap: 8.3px; padding-left: 3px;
  background: linear-gradient(#dfe9fa, #fafcff); border-bottom: 1px solid #d2d4d8;
}
.tool.m { width: 24px; height: 25px; margin: 0; }
.mtxt { font: bold 15px "Liberation Serif", serif; fill: #1a1a1a; text-anchor: middle; }
.n321 { font: bold 9px "Liberation Sans", sans-serif; fill: #222; }
.cadt { font: bold 9px "Liberation Sans", sans-serif; fill: #204a9c; text-anchor: middle; }
.map { font: bold 7px "Liberation Sans", sans-serif; fill: #222; }
.pdf { font: bold 7px "Liberation Sans", sans-serif; fill: #fff; text-anchor: middle; }
.barsep { width: 1px; height: 24px; background: #d6d8dc; margin: 0 -1.5px; flex: none; }
.barsep.clear { width: 0; background: none; margin: 0; }
.alignbody { flex: 1; display: flex; min-height: 0; }
.form { width: 170px; flex: none; padding: 9px 0 0 12px; border-right: 1px solid #d6d6d6; margin-top: 6px; }
.formtitle { height: 18px; line-height: 18px; font-size: 13px; margin-top: -6px; }
.frow { display: flex; align-items: center; height: 20px; margin-top: 1px; font-size: 13px; }
.frow.gap1 { margin-top: 11px; }
.flabel { width: 66px; flex: none; }
.field {
  height: 20px; line-height: 18px; display: block; flex: none; padding-left: 5px; font-size: 12px; color: #333;
  background: #fff; border: 1px solid #aab3bd; border-radius: 4px; overflow: hidden; white-space: nowrap;
}
.field.off { background: #d8e6f8; color: #8f9aa8; border-color: #b5c3d4; }
.w85 { width: 85px; } .w86 { width: 86px; } .w87 { width: 87px; } .w60 { width: 60px; }
.chk { display: flex; align-items: center; height: 14px; margin-top: 7px; font-size: 13px; }
.chk.first { margin-top: 12px; }
.gbox {
  width: 14px; height: 14px; margin-right: 7px; flex: none; display: block; text-align: center;
  font: bold 13px/14px "DejaVu Sans", sans-serif; color: #3e9b3e;
  background: #fff; border: 1px solid #9aa3ad; border-radius: 3px;
}
.gridwrap { margin: 14px 0 0 14px; display: flex; gap: 2px; height: 110px; flex: none; }
.pgrid {
  width: 169px; height: 110px; display: grid; grid-template-columns: 94px 25px 25px 25px;
  grid-template-rows: 21px repeat(5, 16px); align-content: start;
  border: 1px solid #c4c8cd; background:
    linear-gradient(#e8e8e8, #e8e8e8) 93px 0 / 1px 100% no-repeat,
    #fff;
}
.gh { background: #eeeeee; text-align: center; line-height: 18px; font-size: 12px; border-right: 1px solid #ddd; border-bottom: 2px solid #dcc89c; }
.gh.name { font-size: 13px; padding-right: 6px; }
.gc { display: flex; align-items: center; justify-content: center; height: 16px; }
.gc.alt { background: #f4f4f4; }
.gc.hit { background: #fedc91; }
.nmc { justify-content: flex-start; padding-left: 8px; font-size: 12px; }
.nmc.hit { color: #a59468; }
.dot { width: 5px; height: 5px; border-radius: 50%; border: 1px solid #a5443f; background: #e8cfcf; margin-right: 8px; }
.cb {
  width: 12px; height: 12px; display: block; text-align: center; border-radius: 2px;
  font: bold 10px/11px "DejaVu Sans", sans-serif; color: #26364e;
  background: #c9d3e1; border: 1px solid #7a8aa0;
}
.vscroll { width: 11px; display: flex; flex-direction: column; background: #e6edf5; }
.vup { height: 11px; background: #bcd0e8; position: relative; }
.vup::after { content: ""; position: absolute; left: 2px; top: 3px; border: 3.500px solid transparent; border-bottom: 4px solid #1f3a5c; border-top: 0; }
.vtrack { flex: 1; margin-top: 16px; background: #dfe6ee; }
.vdown { height: 11px; position: relative; }
.vdown::after { content: ""; position: absolute; left: 2px; top: 4px; border: 3.500px solid transparent; border-top: 4px solid #1f3a5c; border-bottom: 0; }
.opts { margin-left: 21px; padding-top: 13px; width: 340px; flex: none; }
.optstop { display: flex; height: 60px; }
.erasers { width: 37px; flex: none; display: flex; flex-direction: column; gap: 3px; padding-top: 3px; }
.ccol { flex: none; display: flex; flex-direction: column; }
.c1 { width: 107px; } .c2 { width: 99px; } .c3 { width: 96px; }
.opt { display: flex; align-items: center; height: 20px; font-size: 12px; }
.ob {
  width: 13px; height: 13px; margin-right: 8px; flex: none; display: block; text-align: center;
  font: bold 10px/12px "DejaVu Sans", sans-serif; color: #7ba3cc;
  background: #e6edf5; border: 1px solid #b3bfcc; border-radius: 3px;
}
.ob.blank { background: #fff; border-color: #8f98a3; }
.xs { font-size: 11px; }
.field.shrink { height: 22px; margin-left: -3px; }
.lse { display: flex; align-items: center; height: 20px; margin-top: 3px; font-size: 12px; }
.lselabel { width: 52px; flex: none; }
.lselabel.two { margin-left: 14px; }
.report { margin-left: 16px; }
.btns { display: flex; margin-top: 8px; }
.btn {
  width: 101px; height: 18px; line-height: 16px; text-align: center; font-size: 13px;
  background: linear-gradient(#fafafa, #e2e2e2); border: 1px solid #8f9aa3; border-radius: 3px; box-shadow: inset 0 -1px #bbb;
}
.btn.dim { color: #a8a8a8; width: 100px; }
.b2 { margin-left: 7px; } .b3 { margin-left: 8px; white-space: nowrap; overflow: hidden; font-size: 12px; }
.probepanel {
  flex: 1; margin-left: 2px; padding: 12px 0 0 35px; overflow: hidden; display: flex; flex-direction: column; gap: 4.500px;
  background: linear-gradient(#dfe9fa, #fff 10px); border: 1px solid #c0c2c6; border-right: 0; border-radius: 4px 0 0 4px;
}
.prow { display: flex; align-items: center; height: 20px; font-size: 13px; }
.plabel { width: 117px; flex: none; }
.combo {
  height: 20px; display: flex; align-items: center; justify-content: space-between; flex: none;
  padding: 0 8px 0 5px; font-size: 13px; color: #222;
  background: linear-gradient(#f8f8f8, #fff); border: 1px solid #9aa6ad; border-radius: 4px;
}
.wmid { width: 100px; margin-right: 17px; }
.w84 { width: 84px; } .w64 { width: 64px; }
.arr { width: 0; height: 0; border: 5px solid transparent; border-top: 5px solid #1d2a38; border-bottom: 0; }
.status { height: 36px; display: flex; align-items: flex-start; justify-content: flex-end; gap: 13px; padding: 9px 1px 0 0; }
.stbtn { width: 18px; height: 20px; margin-left: 7px; display: flex; align-items: center; justify-content: center; background: #b8cfee; border: 1px solid #6f8db8; border-radius: 3px; }

/* taskbar */
.taskbar {
  height: 45px; flex: none; display: flex; padding-left: 3.500px; overflow: hidden;
  background: #06070a; border-top: 5px solid #34537f;
}
.tb { width: 49px; height: 40px; flex: none; display: flex; flex-direction: column; align-items: center; padding-top: 6px; }
.tb.on { background: #343436; }
.ul { width: 40px; height: 2px; margin-top: 4px; background: #8f9db0; }
.tb.on .ul { width: 49px; }
.tray { margin-left: auto; display: flex; align-items: center; width: 155px; flex: none; color: #e4e4e4; margin-right: -36px; }
.trayic { width: 18px; height: 16px; margin-right: 6px; }
.trayic.up { width: 14px; height: 10px; margin-right: 8px; }
.ime { font-size: 14px; width: 21px; margin-left: 2px; flex: none; }
.clock { font-size: 13px; line-height: 18px; width: 62px; flex: none; white-space: nowrap; }
.time { padding-left: 23px; }
```
